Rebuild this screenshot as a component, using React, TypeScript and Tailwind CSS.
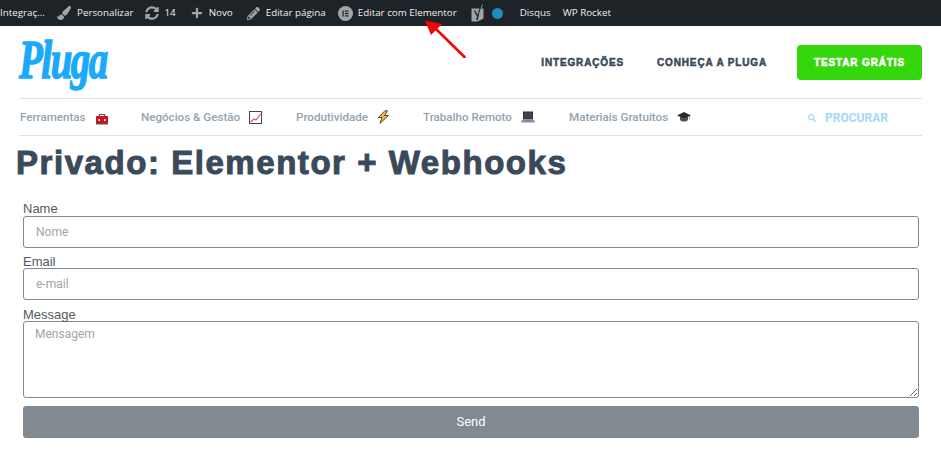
import React from "react";
import { FaPaintBrush, FaPencilAlt, FaPlus, FaSearch, FaSyncAlt } from "react-icons/fa";

const ToolboxIcon = () => (
  <svg width="14" height="12" viewBox="0 0 14 12" className="mt-[3px]">
    <path d="M4.5 3V1.5h5V3" fill="none" stroke="#555" strokeWidth="1.2" />
    <rect x="1" y="3" width="12" height="8" rx="1" fill="#d0101c" />
    <rect x="1" y="10" width="12" height="1.5" fill="#555" />
    <rect x="3.5" y="6" width="1.5" height="2" fill="#fff" />
    <rect x="9" y="6" width="1.5" height="2" fill="#fff" />
  </svg>
);

const ChartIcon = () => (
  <svg width="13" height="13" viewBox="0 0 13 13">
    <rect x="0.5" y="0.5" width="12" height="12" fill="#fff" stroke="#444" />
    <path d="M1.5 11 L5 8 L7 9 L11.5 3" fill="none" stroke="#e0584c" strokeWidth="1.2" />
  </svg>
);

const BoltIcon = () => (
  <svg width="13" height="14" viewBox="0 0 13 14">
    <path d="M8 .7 L1.5 7.5 H5 L3 13.3 L11.5 5.5 H7.5 L10.5 .7 Z" fill="#f5b82e" stroke="#3a3a3a" strokeWidth=".9" strokeLinejoin="round" />
  </svg>
);

const LaptopIcon = () => (
  <svg width="14" height="12" viewBox="0 0 14 12">
    <rect x="2" y="0.5" width="10" height="8" fill="#2b2f36" />
    <rect x="3" y="1.5" width="8" height="6" fill="#3d4450" />
    <path d="M1 9h12l1 2.5H0z" fill="#8a8f96" />
  </svg>
);

const CapIcon = () => (
  <svg width="14" height="12" viewBox="0 0 14 12">
    <path d="M3 5v4c2 2 6 2 8 0V5z" fill="#5a5148" />
    <path d="M7 1 L14 4.5 L7 7.5 L0 4.5 Z" fill="#2c2a28" />
    <path d="M12.5 5v3" stroke="#c9a24a" strokeWidth="1" />
  </svg>
);

const ElementorIcon = () => (
  <span className="flex h-[15px] w-[15px] items-center justify-center rounded-full bg-[#a0a5aa]">
    <svg width="7" height="7" viewBox="0 0 7 7">
      <rect x="0.5" y="0.5" width="1.2" height="6" fill="#1d2327" />
      <rect x="2.8" y="0.5" width="3.7" height="1.2" fill="#1d2327" />
      <rect x="2.8" y="2.9" width="3.7" height="1.2" fill="#1d2327" />
      <rect x="2.8" y="5.3" width="3.7" height="1.2" fill="#1d2327" />
    </svg>
  </span>
);

const YoastIcon = () => (
  <svg width="16" height="20" viewBox="0 0 16 20">
    <path d="M1.5 5.5h12v10l-6 3h-6z" fill="#a0a5aa" />
    <path d="M4.5 7.5 L7.8 13.5 M11.5 1.5 L7.8 13.5 L6.8 17" fill="none" stroke="#1d2327" strokeWidth="1.5" />
    <path d="M12.5 1.5 L9 12" fill="none" stroke="#a0a5aa" strokeWidth=".8" />
  </svg>
);

const ArrowIcon = () => (
  <svg width="44" height="38" viewBox="0 0 44 38">
    <path d="M39.5 37 L11 9" stroke="#f00606" strokeWidth="2.6" strokeLinecap="round" />
    <path d="M0 .5 L17 4 L6 15 Z" fill="#f00606" />
  </svg>
);

const adminIconClass = "text-[#a0a5aa] text-[14px]";

const categories = [
  { label: "Ferramentas", icon: <ToolboxIcon />, width: "w-[121px]" },
  { label: "Negócios & Gestão", icon: <ChartIcon />, width: "w-[155px]" },
  { label: "Produtividade", icon: <BoltIcon />, width: "w-[127px]" },
  { label: "Trabalho Remoto", icon: <LaptopIcon />, width: "w-[146px]" },
  { label: "Materiais Gratuitos", icon: <CapIcon />, width: "w-[239px]" },
];

const inputClass =
  "block w-full rounded-[3px] border border-[#818a91] bg-white font-['Roboto',sans-serif] text-[12px] text-[#3c4a56] outline-none placeholder:text-[#a3a3a3]";

const labelClass = "block h-[14px] text-[13px] leading-[15px] text-[#54595f]";

const App = () => {
  return (
    <div className="relative h-[451px] w-[941px] overflow-hidden bg-white font-['Liberation_Sans',sans-serif]">
      <div className="flex h-[26px] items-center bg-[#1d2327] font-['Open_Sans',sans-serif] text-[9.8px] text-[#f0f0f1]">
        <span className="w-[57px] overflow-hidden whitespace-nowrap">Integraç...</span>
        <FaPaintBrush className={adminIconClass} />
        <span className="ml-[6px]">Personalizar</span>
        <FaSyncAlt className={`ml-[12px] ${adminIconClass}`} />
        <span className="ml-[5px]">14</span>
        <FaPlus className="ml-[15px] text-[12px] text-[#a0a5aa]" />
        <span className="ml-[6px]">Novo</span>
        <FaPencilAlt className="ml-[14px] text-[13px] text-[#a0a5aa]" />
        <span className="ml-[6px]">Editar página</span>
        <span className="ml-[12px]">
          <ElementorIcon />
        </span>
        <span className="ml-[5px]">Editar com Elementor</span>
        <span className="ml-[13px]">
          <YoastIcon />
        </span>
        <span className="ml-[6px] h-[11px] w-[11px] rounded-full bg-[#1e8cbe]" />
        <span className="ml-[17px]">Disqus</span>
        <span className="ml-[12px]">WP Rocket</span>
      </div>

      <div className="absolute left-[425px] top-[20px]">
        <ArrowIcon />
      </div>

      <div className="mx-[19px]">
        <div className="flex h-[73px] items-center border-b border-[#e2e2e2]">
          <span className="inline-block origin-left scale-x-[0.72] pb-[4px] font-['Liberation_Serif',serif] text-[54px] leading-none font-bold italic tracking-[-2px] text-[#1ba9fb] [-webkit-text-stroke:1.5px_#1ba9fb]">
            Pluga
          </span>
          <div className="ml-auto flex items-center text-[10px] font-bold tracking-[0.85px] text-[#3a4a5a] [-webkit-text-stroke:0.5px_#3a4a5a]">
            <span>INTEGRAÇÕES</span>
            <span className="ml-[33px]">CONHEÇA A PLUGA</span>
            <span className="ml-[30px] flex h-[35px] w-[125px] items-center justify-center rounded-[4px] bg-[#34d60c] text-white [-webkit-text-stroke:0.5px_#fff]">
              TESTAR GRÁTIS
            </span>
          </div>
        </div>

        <div className="flex h-[37px] items-center border-b border-[#e2e2e2] pt-[1px] pl-[1px] font-['Roboto',sans-serif] text-[11.6px] font-medium text-[#93a3b1]">
          {categories.map((category) => (
            <div key={category.label} className={`flex items-center gap-[9px] ${category.width}`}>
              <span className="whitespace-nowrap">{category.label}</span>
              {category.icon}
            </div>
          ))}
          <div className="flex items-center text-[#a3d8f6]">
            <FaSearch className="text-[8px]" />
            <span className="ml-[9px] text-[12px] font-bold">PROCURAR</span>
          </div>
        </div>
      </div>

      <h1 className="mt-[8px] ml-[16px] text-[33px] leading-[38px] font-bold tracking-[1.55px] text-[#3a4a5a] [-webkit-text-stroke:1px_#3a4a5a]">
        Privado: Elementor + Webhooks
      </h1>

      <form className="mx-[22px] mt-[19px] pl-[1px]">
        <label className={`${labelClass} pb-[1px]`}>Name</label>
        <input className={`${inputClass} mt-[1px] h-[32px] px-[12px]`} placeholder="Nome" />
        <label className={`${labelClass} mt-[6px]`}>Email</label>
        <input className={`${inputClass} h-[32px] px-[12px]`} placeholder="e-mail" />
        <label className={`${labelClass} mt-[7px]`}>Message</label>
        <textarea className={`${inputClass} h-[77px] px-[11px] py-[3px]`} placeholder="Mensagem" />
        <button type="button" className="mt-[8px] block h-[32px] w-full rounded-[3px] bg-[#818a91] font-['Roboto',sans-serif] text-[13px] text-white">
          Send
        </button>
      </form>
    </div>
  );
};

export default App;
